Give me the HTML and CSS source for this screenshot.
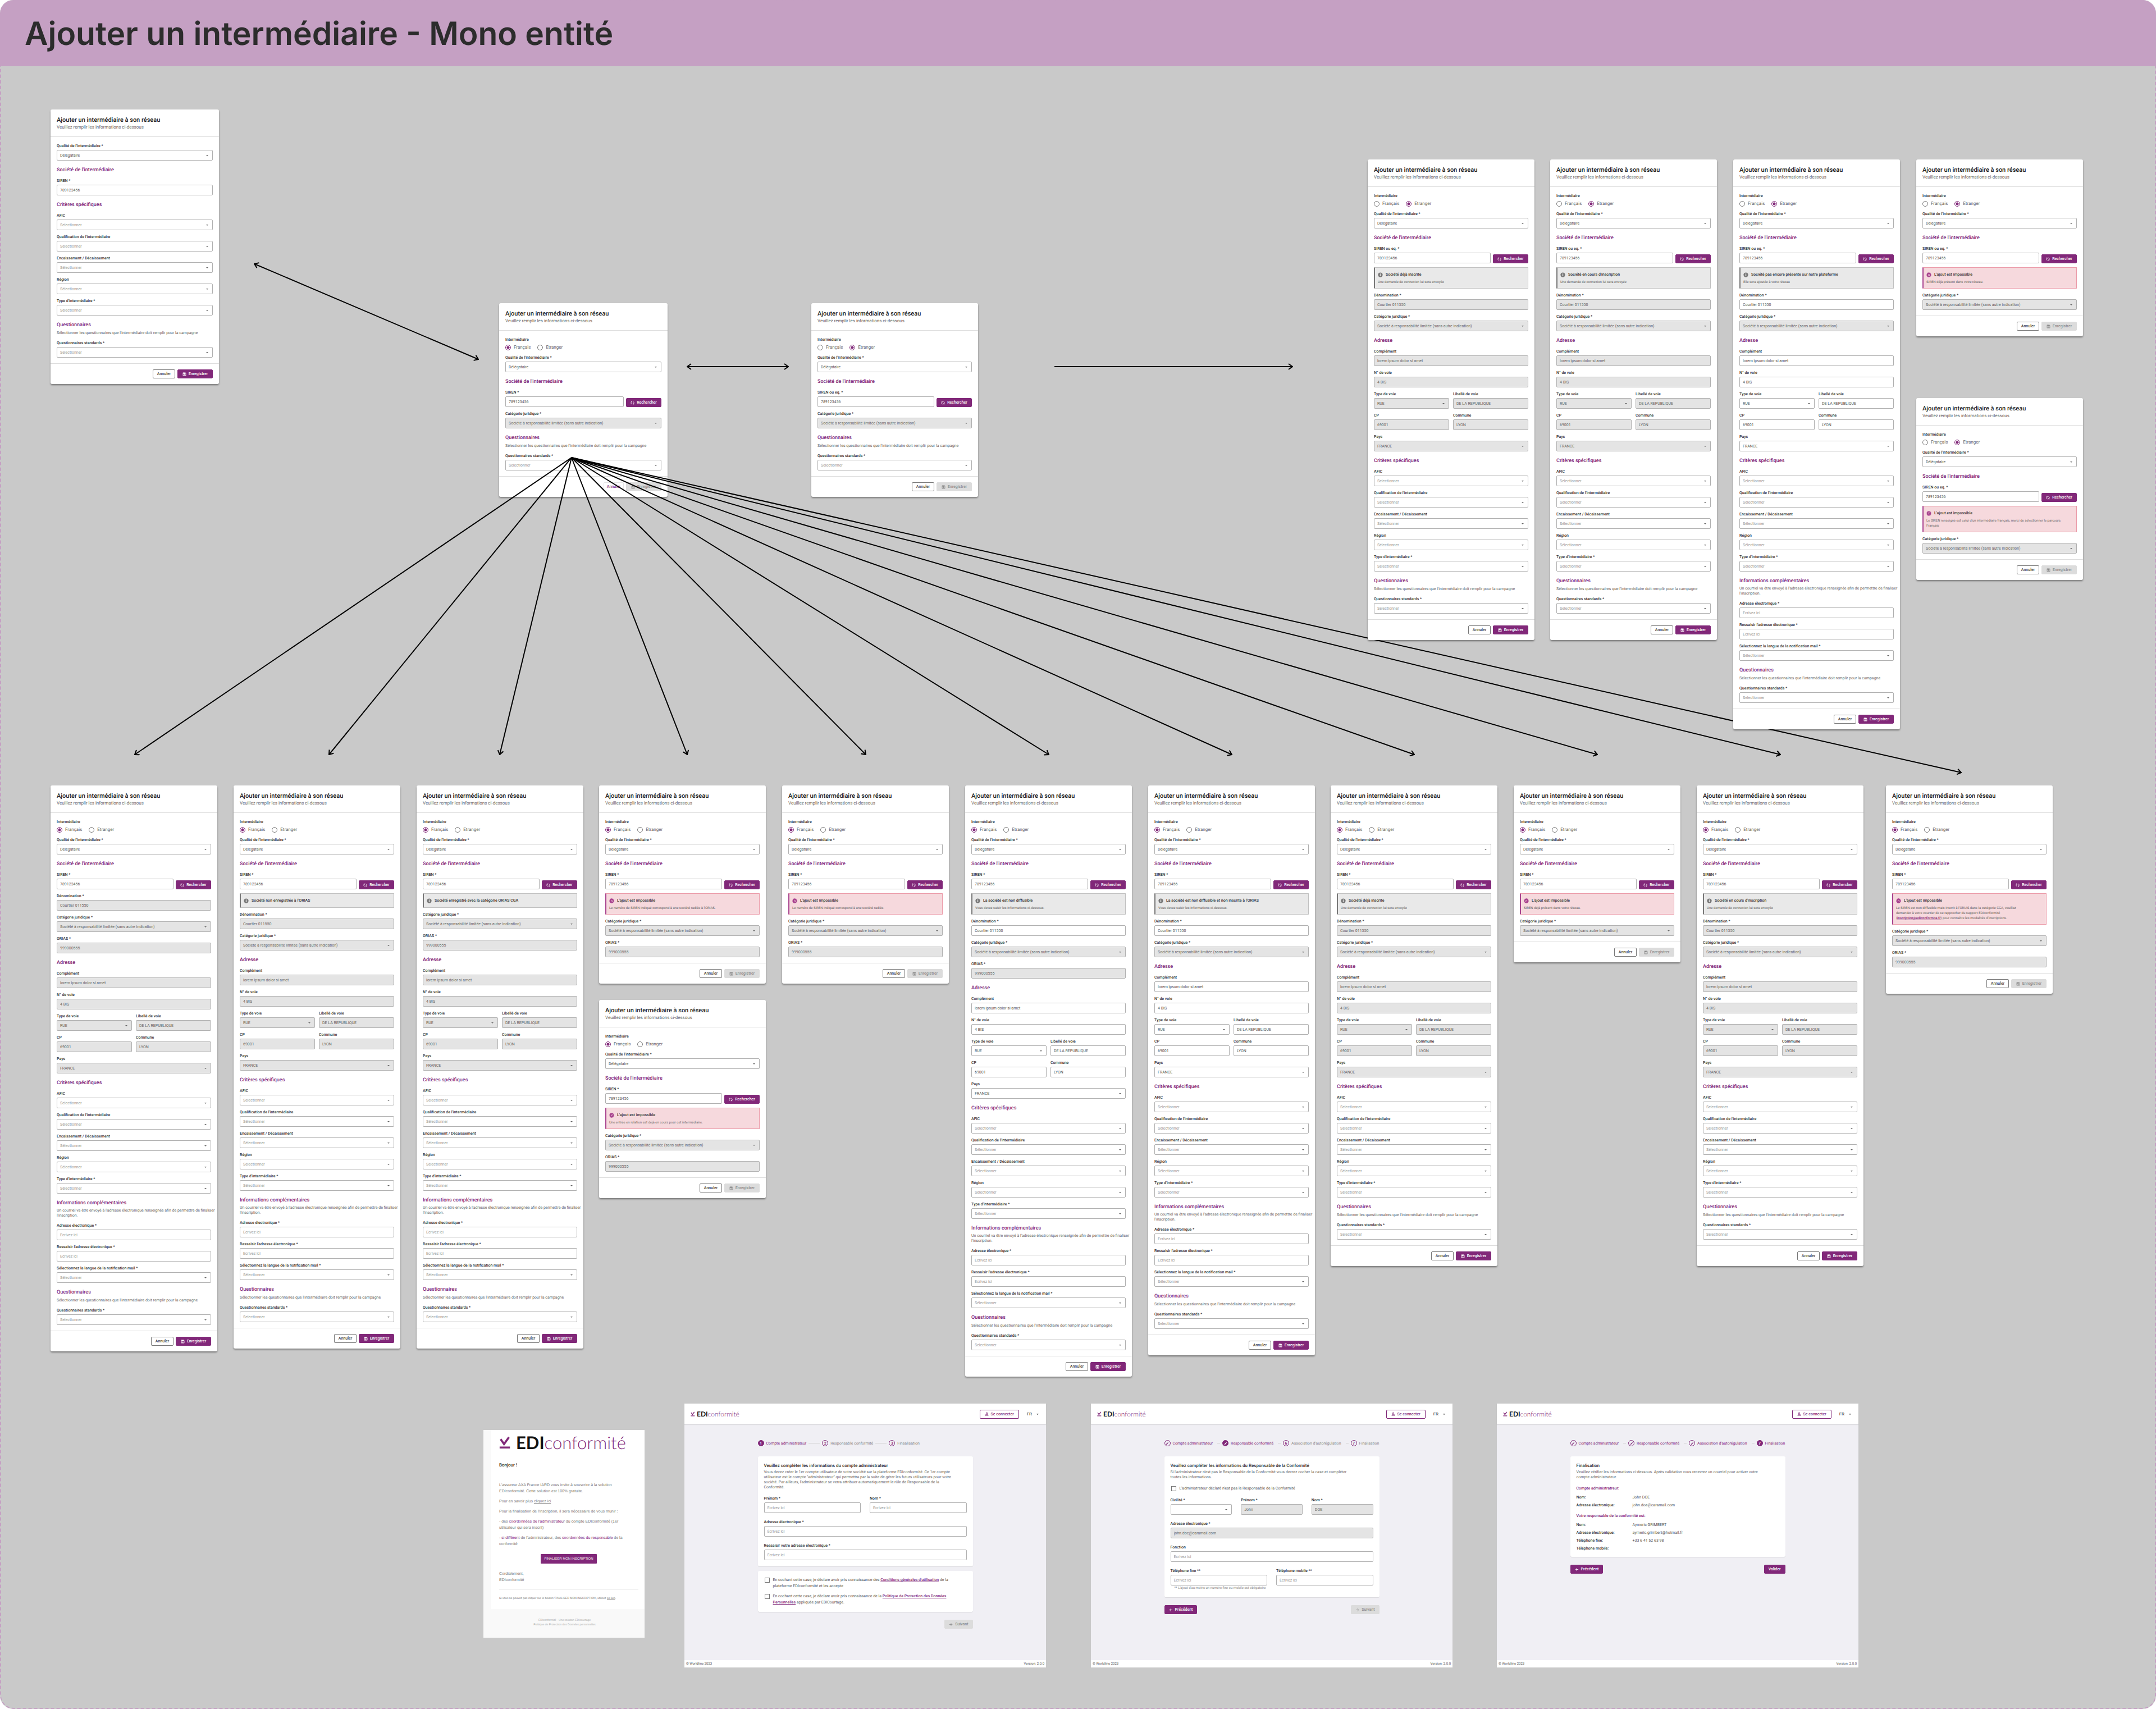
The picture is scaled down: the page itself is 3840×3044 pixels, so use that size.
FILE: index.html
```html
<!DOCTYPE html>
<html lang="fr">
<head>
    <meta charset="utf-8">
    <title>Ajouter un intermédiaire - Mono entité</title>
    <link rel="stylesheet" href="styles.css">
</head>
<body>

<!-- Icons -->
<svg class="sprite" aria-hidden="true">
    <symbol id="i-save" viewBox="0 0 24 24"><path fill="currentColor" fill-rule="evenodd" d="M4 2h14l4 4v14a2 2 0 0 1-2 2H4a2 2 0 0 1-2-2V4a2 2 0 0 1 2-2zm1 3v14h14V8l-3-3v5H6V5H5zm7 7a3 3 0 1 1 0 6 3 3 0 0 1 0-6z"/></symbol>
    <symbol id="i-sync" viewBox="0 0 24 24"><g fill="none" stroke="currentColor" stroke-width="3"><path d="M9 20c-4-1-6-4-6-8 0-3 2-6 4-7M15 4c4 1 6 4 6 8 0 3-2 6-4 7"/><path d="M3 4h5v5M21 20h-5v-5"/></g></symbol>
    <symbol id="i-info" viewBox="0 0 24 24"><circle cx="12" cy="12" r="11" fill="#777"/><path fill="#e9e9e9" d="M10 10h4v8h-4zM10 6h4v3h-4z"/></symbol>
    <symbol id="i-error" viewBox="0 0 24 24"><path fill="#a8438f" d="M12 0l3 2 4 0 1 4 3 2-1 4 1 4-3 2-1 4h-4l-3 2-3-2H5l-1-4-3-2 1-4-1-4 3-2 1-4h4z"/><path stroke="#f6d9dd" stroke-width="2" d="M8 8l8 8M16 8l-8 8"/></symbol>
    <symbol id="i-user" viewBox="0 0 24 24"><g fill="none" stroke="currentColor" stroke-width="3"><circle cx="12" cy="7" r="4"/><path d="M3 21v-2c0-3 5-4 9-4s9 1 9 4v2z"/></g></symbol>
    <symbol id="i-pen" viewBox="0 0 24 24"><path fill="currentColor" d="M3 17v4h4L18 10l-4-4zM20 8c1-1 1-1 0-2l-2-2c-1-1-1-1-2 0l-1 1 4 4z"/></symbol>
    <symbol id="i-left" viewBox="0 0 24 24"><path fill="none" stroke="currentColor" stroke-width="3" d="M21 12H5M12 4l-8 8 8 8"/></symbol>
    <symbol id="i-right" viewBox="0 0 24 24"><path fill="none" stroke="currentColor" stroke-width="3" d="M3 12h16M12 4l8 8-8 8"/></symbol>
    <symbol id="i-logo" viewBox="0 0 24 24"><path fill="none" stroke="currentColor" stroke-width="4" d="M3 5l7 10L20 1M1 22h21"/></symbol>
</svg>

<main class="board">
    <h1 class="board-title">Ajouter un intermédiaire - Mono entité</h1>
    <div class="canvas" id="canvas">
        <svg class="arrows" id="arrows" aria-hidden="true">
            <defs>
                <marker id="head" viewBox="0 0 12 12" refX="11" refY="6" markerWidth="12" markerHeight="12" markerUnits="userSpaceOnUse" orient="auto-start-reverse">
                    <path d="M4 1l7 5-7 5" fill="none" stroke="#000" stroke-width="2"/>
                </marker>
            </defs>
        </svg>

        <!-- Invitation mail -->
        <article class="mail" data-x="861" data-y="2547">
            <div class="mail-body">
                <div class="logo logo-big"><svg><use href="#i-logo"/></svg><b>EDI</b><span>conformité</span></div>
                <h2>Bonjour !</h2>
                <p>L'assureur AXA France IARD vous invite à souscrire à la solution<br>EDIconformité. Cette solution est 100% gratuite.</p>
                <p>Pour en savoir plus <a href="#">cliquez ici</a></p>
                <p>Pour la finalisation de l'inscription, il sera nécessaire de vous munir :</p>
                <p>- des <em>coordonnées de l'administrateur</em> du compte EDIconformité (1er<br>utilisateur qui sera inscrit)</p>
                <p>- <em>si différent</em> de l'administrateur, des <em>coordonnées du responsable</em> de la<br>conformité</p>
                <button class="mail-btn">FINALISER MON INSCRIPTION</button>
                <p>Cordialement,<br>EDIconformité</p>
                <p class="mail-note">Si vous ne pouvez pas cliquer sur le bouton 'FINALISER MON INSCRIPTION', utilisez <a href="#">ce lien</a>.</p>
            </div>
            <footer>EDIconformité - Une solution EDIcourtage<br>Politique de Protection des Données personnelles</footer>
        </article>

        <!-- Step 1 -->
        <section class="screen" data-x="1219" data-y="2500">
            <header class="screen-head">
                <div class="logo"><svg><use href="#i-logo"/></svg><b>EDI</b><span>conformité</span></div>
                <button class="btn btn-login"><svg><use href="#i-user"/></svg>Se connecter</button>
                <button class="lang">FR</button>
            </header>
            <div class="screen-main">
                <ol class="steps steps-short">
                    <li class="on"><i>1</i>Compte administrateur</li>
                    <li><i>2</i>Responsable conformité</li>
                    <li><i>3</i>Finsalisation</li>
                </ol>
                <form class="panel">
                    <h2>Veuillez compléter les informations du compte administrateur</h2>
                    <p>Vous devez créer le 1er compte utilisateur de votre société sur la plateforme EDIconformité. Ce 1er compte<br>utilisateur est le compte "administrateur" qui permettra par la suite de gérer les futurs utilisateurs pour votre<br>société. Par ailleurs, l'administrateur se verra attribuer automatiquement le rôle de Responsable de la<br>Conformité.</p>
                    <div class="row">
                        <div class="field"><label for="s1-prenom">Prénom *</label><input id="s1-prenom" placeholder="Écrivez ici"></div>
                        <div class="field"><label for="s1-nom">Nom *</label><input id="s1-nom" placeholder="Écrivez ici"></div>
                    </div>
                    <div class="field"><label for="s1-mail">Adresse électronique *</label><input id="s1-mail" placeholder="Écrivez ici"></div>
                    <div class="field"><label for="s1-mail2">Ressaisir votre adresse électronique *</label><input id="s1-mail2" placeholder="Écrivez ici"></div>
                </form>
                <div class="panel panel-terms">
                    <label class="check"><input type="checkbox"><span>En cochant cette case, je déclare avoir pris connaissance des <a href="#">Conditions générales d'utilisation</a> de la<br>plateforme EDIconformité et les accepte</span></label>
                    <label class="check"><input type="checkbox"><span>En cochant cette case, je déclare avoir pris connaissance de la <a href="#">Politique de Protection des Données<br>Personnelles</a> appliquée par EDICourtage.</span></label>
                </div>
                <div class="nav nav-end"><button class="btn btn-off" disabled><svg><use href="#i-right"/></svg>Suivant</button></div>
            </div>
            <footer class="screen-foot"><span>© Worldline 2023</span><span>Version: 2.0.0</span></footer>
        </section>

        <!-- Step 2 -->
        <section class="screen" data-x="1943" data-y="2500">
            <header class="screen-head">
                <div class="logo"><svg><use href="#i-logo"/></svg><b>EDI</b><span>conformité</span></div>
                <button class="btn btn-login"><svg><use href="#i-user"/></svg>Se connecter</button>
                <button class="lang">FR</button>
            </header>
            <div class="screen-main">
                <ol class="steps">
                    <li class="done"><i><svg><use href="#i-pen"/></svg></i>Compte administrateur</li>
                    <li class="on"><i><svg><use href="#i-pen"/></svg></i>Responsable conformité</li>
                    <li><i>6</i>Association d'autorégulation</li>
                    <li><i>7</i>Finalisation</li>
                </ol>
                <form class="panel">
                    <h2>Veuillez compléter les informations du Responsable de la Conformité</h2>
                    <p>Si l'administrateur n'est pas le Responsable de la Conformité vous devrez cocher la case et compléter<br>toutes les informations.</p>
                    <label class="check"><input type="checkbox"><span>L'administrateur déclaré n'est pas le Responsable de la Conformité</span></label>
                    <div class="row">
                        <div class="field"><label for="s2-civ">Civilité *</label><div class="select"><select id="s2-civ"><option></option></select></div></div>
                        <div class="field"><label for="s2-prenom">Prénom *</label><input id="s2-prenom" value="John" disabled></div>
                        <div class="field"><label for="s2-nom">Nom *</label><input id="s2-nom" value="DOE" disabled></div>
                    </div>
                    <div class="field"><label for="s2-mail">Adresse électronique *</label><input id="s2-mail" value="john.doe@caramail.com" disabled></div>
                    <div class="field"><label for="s2-fonc">Fonction</label><input id="s2-fonc" placeholder="Écrivez ici"></div>
                    <div class="row">
                        <div class="field"><label for="s2-fixe">Téléphone fixe **</label><input id="s2-fixe" placeholder="Écrivez ici"></div>
                        <div class="field"><label for="s2-mob">Téléphone mobile **</label><input id="s2-mob" placeholder="Écrivez ici"></div>
                    </div>
                    <small>** L'ajout d'au moins un numéro fixe ou mobile est obligatoire</small>
                </form>
                <div class="nav">
                    <button class="btn"><svg><use href="#i-left"/></svg>Précédent</button>
                    <button class="btn btn-off" disabled><svg><use href="#i-right"/></svg>Suivant</button>
                </div>
            </div>
            <footer class="screen-foot"><span>© Worldline 2023</span><span>Version: 2.0.0</span></footer>
        </section>

        <!-- Last step -->
        <section class="screen" data-x="2666" data-y="2500">
            <header class="screen-head">
                <div class="logo"><svg><use href="#i-logo"/></svg><b>EDI</b><span>conformité</span></div>
                <button class="btn btn-login"><svg><use href="#i-user"/></svg>Se connecter</button>
                <button class="lang">FR</button>
            </header>
            <div class="screen-main">
                <ol class="steps">
                    <li class="done"><i><svg><use href="#i-pen"/></svg></i>Compte administrateur</li>
                    <li class="done"><i><svg><use href="#i-pen"/></svg></i>Responsable conformité</li>
                    <li class="done"><i><svg><use href="#i-pen"/></svg></i>Association d'autorégulation</li>
                    <li class="on"><i>7</i>Finalisation</li>
                </ol>
                <div class="panel panel-recap">
                    <h2>Finalisation</h2>
                    <p>Veuillez vérifier les informations ci-dessous. Après validation vous recevrez un courriel pour activer votre<br>compte administrateur.</p>
                    <h3>Compte administratreur:</h3>
                    <dl>
                        <dt>Nom:</dt><dd>John DOE</dd>
                        <dt>Adresse électronique:</dt><dd>john.doe@caramail.com</dd>
                    </dl>
                    <h3>Votre responsable de la conformité est:</h3>
                    <dl>
                        <dt>Nom:</dt><dd>Aymeric GRIMBERT</dd>
                        <dt>Adresse électronique:</dt><dd>aymeric.grimbert@hotmail.fr</dd>
                        <dt>Téléphone fixe:</dt><dd>+33 6 41 52 63 98</dd>
                        <dt>Téléphone mobile:</dt><dd></dd>
                    </dl>
                </div>
                <div class="nav">
                    <button class="btn"><svg><use href="#i-left"/></svg>Précédent</button>
                    <button class="btn">Valider</button>
                </div>
            </div>
            <footer class="screen-foot"><span>© Worldline 2023</span><span>Version: 2.0.0</span></footer>
        </section>
    </div>
</main>

<script src="script.js"></script>
</body>
</html>
```

FILE: styles.css
```css
* {
    box-sizing: border-box;
}
body {
    margin: 0;
    background: #fff;
    font-family: Roboto, sans-serif;
    font-size: 7px;
    line-height: 10px;
    color: #333;
    text-rendering: geometricPrecision;
}
h1, h2, h3, p, ol, dl, dd {
    margin: 0;
    padding: 0;
}
button, input, select {
    font: inherit;
    color: inherit;
    margin: 0;
}
.sprite {
    position: absolute;
    width: 0;
    height: 0;
}

/* ---- Board ---- */
.board {
    position: relative;
    display: flex;
    flex-direction: column;
    min-height: 100vh;
    background: #c9c9c9;
    border-radius: 24px;
    overflow: hidden;
}
.board::after {
    content: "";
    position: absolute;
    inset: 0;
    border: 2px dashed #c5a0c3;
    border-radius: 24px;
    pointer-events: none;
}
.board-title {
    padding: 25px 44px 24px;
    background: #c5a0c3;
    font-family: Inter, sans-serif;
    font-size: 57px;
    font-weight: 600;
    line-height: 69px;
    color: #2c2c2c;
}
.canvas {
    flex: 1;
}
.arrows {
    position: absolute;
    top: 0;
    left: 0;
    width: 100%;
    height: 100%;
}
.arrows line {
    stroke: #000;
    stroke-width: 2;
}

/* ---- Form cards ---- */
.card {
    position: absolute;
    width: 297px;
    background: #fff;
    border-radius: 3px;
    box-shadow: 0 2px 3px rgba(0, 0, 0, 0.4);
}
.card-wide {
    width: 300px;
}
.card-head {
    height: 49px;
    padding: 12px 11px;
    border-bottom: 1px solid #ddd;
}
.card-head h2 {
    font-size: 11px;
    line-height: 14px;
    font-weight: 500;
    color: #222;
}
.card-head p {
    font-size: 8px;
    line-height: 12px;
    color: #666;
}
.card-body {
    padding: 11px 11px 10px;
    display: flex;
    flex-direction: column;
    gap: 7px;
}
.card-foot {
    display: flex;
    justify-content: flex-end;
    gap: 4px;
    padding: 10px 11px;
    border-top: 1px solid #ddd;
}
.section {
    margin-top: 4px;
    padding-bottom: 1px;
}
.section h3 {
    font-size: 9px;
    line-height: 12px;
    font-weight: 500;
    color: #812879;
}
.section p {
    margin-top: 3px;
    color: #666;
}
.section .tight {
    line-height: 9px;
    white-space: nowrap;
}

/* ---- Fields ---- */
.field {
    display: flex;
    flex-direction: column;
    gap: 2px;
    flex: 1;
    min-width: 0;
}
.field > label, .field > .legend {
    font-weight: 500;
}
.row {
    display: flex;
    gap: 7px;
}
.field input:not([type=radio]), .field select {
    display: block;
    width: 100%;
    height: 19px;
    padding: 0 5px;
    border: 1px solid #b0b0b0;
    border-radius: 2px;
    background: #fff;
    color: #555;
    appearance: none;
}
.field input:disabled, .field select:disabled {
    background: #e4e4e4;
    color: #666;
    opacity: 1;
}
.field input::placeholder, .field select.empty {
    color: #999;
}
.select {
    position: relative;
}
.select::after {
    content: "";
    position: absolute;
    right: 8px;
    top: 9px;
    border: 2px solid transparent;
    border-top-color: #666;
    border-bottom: 0;
}
.radios {
    display: flex;
    gap: 12px;
    height: 13px;
}
.radios label {
    display: flex;
    align-items: center;
    gap: 5px;
    font-size: 8px;
    color: #666;
}
.radios input {
    appearance: none;
    width: 10px;
    height: 10px;
    border: 1px solid #777;
    border-radius: 50%;
}
.radios input:checked {
    border-color: #812879;
    background: radial-gradient(#812879 0 2px, #fff 3px);
}
.search {
    display: flex;
    align-items: flex-end;
    gap: 4px;
}

/* ---- Buttons ---- */
.btn {
    display: flex;
    align-items: center;
    justify-content: center;
    gap: 4px;
    height: 16px;
    padding: 0 7px;
    border: 1px solid #812879;
    border-radius: 2px;
    background: #812879;
    color: #fff;
    font-weight: 500;
    white-space: nowrap;
}
.btn svg {
    width: 7px;
    height: 7px;
}
.btn-main {
    width: 63px;
}
.btn-cancel {
    width: 40px;
    background: #fff;
    border-color: #777;
    color: #444;
}
.btn-soft {
    width: 36px;
    background: transparent;
    border-color: #e4e4e4;
    color: #812879;
}
.btn-off {
    background: #dcdcdc;
    border-color: #dcdcdc;
    color: #8c8c8c;
}

/* ---- Alerts ---- */
.alert {
    padding: 6px 6px 6px 5px;
    border: 1px solid #c0c0c0;
    border-left: 2px solid #777;
    border-radius: 1px;
    background: #e9e9e9;
    color: #666;
    font-size: 6px;
    line-height: 9px;
}
.alert h4 {
    display: flex;
    align-items: center;
    gap: 5px;
    margin: 0;
    font-size: 7px;
    line-height: 12px;
    font-weight: 500;
    color: #333;
}
.alert h4 svg {
    width: 9px;
    height: 9px;
}
.alert p {
    margin-top: 3px;
}
.alert-error {
    background: #f6d9dd;
    border-color: #eb9aa8;
    border-left-color: #a8438f;
}
.alert a {
    color: #812879;
    font-weight: 500;
}

/* ---- Logo ---- */
.logo {
    display: flex;
    align-items: center;
    font-family: Lato, sans-serif;
    font-size: 12px;
    line-height: 18px;
    color: #812879;
}
.logo svg {
    width: 8px;
    height: 9px;
    margin-right: 3px;
}
.logo b {
    font-weight: 700;
    color: #111;
}
.logo span {
    font-weight: 300;
}
.logo-big {
    font-size: 31px;
    line-height: 28px;
}
.logo-big svg {
    width: 21px;
    height: 23px;
    margin-right: 9px;
}

/* ---- Mail ---- */
.mail {
    position: absolute;
    width: 287px;
    background: #fff;
    border-left: 13px solid #f9f9f9;
    font-family: "Liberation Sans", Arial, sans-serif;
    line-height: 11px;
    color: #777;
}
.mail-body {
    padding: 8px 11px 13px 15px;
}
.mail h2 {
    margin: 21px 0 24px;
    font-family: Roboto, sans-serif;
    font-size: 8px;
    line-height: 12px;
    font-weight: 500;
    color: #222;
}
.mail p {
    margin-bottom: 7px;
}
.mail a {
    color: inherit;
}
.mail em {
    font-style: normal;
    color: #812879;
}
.mail-btn {
    display: block;
    width: 100px;
    height: 17px;
    margin: 12px auto 13px;
    padding: 0;
    border: 0;
    border-radius: 1px;
    background: #812879;
    color: #fff;
    font-size: 6px;
}
.mail .mail-note {
    margin: 11px 0 0;
    padding-top: 10px;
    border-top: 1px solid #eee;
    font-size: 5px;
}
.mail footer {
    padding: 16px 11px 19px 0;
    background: #f9f9f9;
    font-size: 5px;
    line-height: 8px;
    text-align: center;
    color: #aaa;
}

/* ---- Screens ---- */
.screen {
    position: absolute;
    display: flex;
    flex-direction: column;
    width: 644px;
    height: 470px;
    background: #f0eff4;
}
.screen-head {
    display: flex;
    align-items: center;
    height: 37px;
    padding: 0 11px;
    background: #fff;
    box-shadow: 0 1px 1px rgba(0, 0, 0, 0.1);
}
.btn-login {
    margin-left: auto;
    padding: 0 8px;
    background: #fff;
    color: #812879;
}
.lang {
    display: flex;
    align-items: center;
    gap: 8px;
    margin-left: 12px;
    padding: 0 2px;
    border: 0;
    background: none;
    font-size: 8px;
    color: #222;
}
.lang::after {
    content: "";
    border: 2px solid transparent;
    border-top-color: #222;
    border-bottom: 0;
}
.screen-main {
    flex: 1;
    display: flex;
    flex-direction: column;
    width: 383px;
    margin: 0 auto;
    padding-top: 28px;
}
.screen-foot {
    display: flex;
    justify-content: space-between;
    padding: 2px 3px 1px;
    background: #fff;
    color: #555;
    font-size: 6px;
}
.steps {
    display: flex;
    justify-content: space-between;
    list-style: none;
    margin-bottom: 18px;
    color: #888;
}
.steps li {
    display: flex;
    align-items: center;
    gap: 4px;
}
.steps li + li::before {
    content: "";
    width: 5px;
    border-top: 1px solid #ccc;
}
.steps-short {
    justify-content: flex-start;
    gap: 4px;
}
.steps-short li + li::before {
    width: 20px;
}
.steps i {
    display: flex;
    align-items: center;
    justify-content: center;
    width: 11px;
    height: 11px;
    border: 1px solid #812879;
    border-radius: 50%;
    font-style: normal;
    font-weight: 700;
    color: #812879;
}
.steps svg {
    width: 6px;
    height: 6px;
}
.steps .on, .steps .done {
    color: #812879;
}
.steps .on i {
    background: #812879;
    color: #fff;
}
.panel {
    padding: 11px;
    border-radius: 3px;
    background: #fff;
    box-shadow: 0 1px 1px rgba(0, 0, 0, 0.1);
}
.panel h2 {
    font-size: 8px;
    line-height: 12px;
    font-weight: 500;
}
.panel > p {
    margin: 1px 0 10px;
    line-height: 9px;
    color: #666;
}
.panel .field + .field, .panel .row + .field, .panel .field + .row {
    margin-top: 11px;
}
.panel .row {
    gap: 16px;
}
.panel .row .field {
    margin-top: 0;
}
.panel small {
    display: block;
    padding-left: 7px;
    font-size: 6px;
    color: #888;
}
.check {
    display: flex;
    gap: 5px;
    line-height: 11px;
    color: #555;
}
.check input {
    appearance: none;
    flex: none;
    width: 9px;
    height: 9px;
    margin: 1px;
    border: 1px solid #777;
    border-radius: 0;
}
.check a {
    color: #812879;
    font-weight: 500;
}
.panel p + .check {
    margin-bottom: 10px;
}
.panel-terms {
    display: flex;
    flex-direction: column;
    gap: 7px;
    margin-top: 8px;
}
.panel-recap {
    padding-bottom: 8px;
}
.panel h3 {
    margin: 7px 0 4px;
    font-size: 7px;
    font-weight: 500;
    color: #812879;
}
.panel dl {
    display: grid;
    grid-template-columns: 100px 1fr;
    line-height: 14px;
}
.panel dt {
    font-weight: 500;
}
.panel dd {
    color: #555;
}
.nav {
    display: flex;
    justify-content: space-between;
    margin-top: 14px;
}
.nav-end {
    justify-content: flex-end;
}
```

FILE: script.js
```js
// ---- Field helpers ----
let uid = 0;

function field(label, value, opt = {}) {
    const id = 'f' + (++uid);
    const off = opt.off ? ' disabled' : '';
    let control;
    if (opt.select) {
        const empty = opt.empty ? ' class="empty"' : '';
        control = `<div class="select"><select id="${id}"${empty}${off}><option>${value}</option></select></div>`;
    } else if (opt.empty) {
        control = `<input id="${id}" placeholder="${value}">`;
    } else {
        control = `<input id="${id}" value="${value}"${off}>`;
    }
    return `<div class="field"><label for="${id}">${label}</label>${control}</div>`;
}

const pick = (label, value = 'Sélectionner') => field(label, value, { select: true, empty: true });
const section = (title, text = '', cls = '') =>
    `<div class="section"><h3>${title}</h3>${text ? `<p class="${cls}">${text}</p>` : ''}</div>`;
const row = (a, b) => `<div class="row">${a}${b}</div>`;

// ---- Form blocks ----
function origin(foreign) {
    const name = 'r' + (++uid);
    return `<div class="field"><span class="legend">Intermédiaire</span><div class="radios">
        <label><input type="radio" name="${name}" ${foreign ? '' : 'checked'}>Français</label>
        <label><input type="radio" name="${name}" ${foreign ? 'checked' : ''}>Etranger</label>
    </div></div>`;
}

const quality = () => field("Qualité de l'intermédiaire *", 'Délégataire', { select: true });

function siren(label) {
    return `<div class="search">${field(label, '789123456')}
        <button type="button" class="btn btn-main"><svg><use href="#i-sync"/></svg>Rechercher</button></div>`;
}

function alertBox(type, title, text) {
    return `<div class="alert alert-${type}"><h4><svg><use href="#i-${type}"/></svg>${title}</h4>${text ? `<p>${text}</p>` : ''}</div>`;
}

const denom = off => field('Dénomination *', 'Courtier 011550', { off });
const categ = () => field('Catégorie juridique *', 'Société à responsabilité limitée (sans autre indication)', { select: true, off: true });
const orias = () => field('ORIAS *', '999000555', { off: true });

const address = off => section('Adresse') +
    field('Complément', 'lorem ipsum dolor si amet', { off }) +
    field('N° de voie', '4 BIS', { off }) +
    row(field('Type de voie', 'RUE', { off, select: true }), field('Libellé de voie', 'DE LA REPUBLIQUE', { off })) +
    row(field('CP', '69001', { off }), field('Commune', 'LYON', { off })) +
    field('Pays', 'FRANCE', { off, select: true });

const criteria = () => section('Critères spécifiques') +
    pick('AFIC', 'Selectionner') +
    pick("Qualification de l'intermédiaire") +
    pick('Encaissement / Décaissement') +
    pick('Région') +
    pick("Type d'intermédiaire *");

const infos = () => section('Informations complémentaires',
    "Un courriel va être envoyé à l'adresse électronique renseignée afin de permettre de finaliser<br>l'inscription.", 'tight') +
    field('Adresse électronique *', 'Ecrivez ici', { empty: true }) +
    field("Ressaisir l'adresse électronique *", 'Ecrivez ici', { empty: true }) +
    pick('Sélectionnez la langue de la notification mail *');

const quest = () => section('Questionnaires', "Sélectionner les questionnaires que l'intermédiaire doit remplir pour la campagne") +
    pick('Questionnaires standards *', 'Selectionner');

const company = () => section("Société de l'intermédiaire");
const french = () => origin(false) + quality() + company() + siren('SIREN *');
const foreign = () => origin(true) + quality() + company() + siren('SIREN ou eq. *');

const info = (title, text) => alertBox('info', title, text);
const error = text => alertBox('error', "L'ajout est impossible", text);

// ---- Cards of the board ----
const behind = [
    { x: 889, y: 540, wide: true, soft: true, off: true, body: french() + categ() + quest() },
    { x: 1445, y: 540, off: true, body: foreign() + categ() + quest() }
];

const cards = [
    { x: 90, y: 195, wide: true, body: quality() + company() + field('SIREN *', '789123456') + criteria() + quest() },
    { x: 2436, y: 284, body: foreign() + info('Société déjà inscrite', 'Une demande de connexion lui sera envoyée') + denom(true) + categ() + address(true) + criteria() + quest() },
    { x: 2761, y: 284, body: foreign() + info("Société en cours d'inscription", 'Une demande de connexion lui sera envoyée') + denom(true) + categ() + address(true) + criteria() + quest() },
    { x: 3087, y: 284, body: foreign() + info('Société pas encore présente sur notre plateforme', 'Elle sera ajoutée à votre réseau') + denom(false) + categ() + address(false) + criteria() + infos() + quest() },
    { x: 3413, y: 284, off: true, body: foreign() + error('SIREN déjà présent dans votre réseau.') + categ() },
    { x: 3413, y: 709, off: true, body: foreign() + error("Le SIREN renseigné est celui d'un intermédiaire français, merci de sélectionner le parcours<br>Français") + categ() },

    { x: 90, y: 1399, body: french() + denom(true) + categ() + orias() + address(true) + criteria() + infos() + quest() },
    { x: 416, y: 1399, body: french() + info("Société non enregistrée à l'ORIAS") + denom(true) + categ() + address(true) + criteria() + infos() + quest() },
    { x: 742, y: 1399, body: french() + info('Société enregistré avec la catégorie ORIAS CGA') + categ() + orias() + address(true) + criteria() + infos() + quest() },
    { x: 1067, y: 1399, off: true, body: french() + error("Le numéro de SIREN indiqué correspond à une société radiée à l'ORIAS.") + categ() + orias() },
    { x: 1067, y: 1781, off: true, body: french() + error('Une entrée en relation est déjà en cours pour cet intermédiaire.') + categ() + orias() },
    { x: 1393, y: 1399, off: true, body: french() + error('Le numéro de SIREN indiqué correspond à une société radiée.') + categ() + orias() },
    { x: 1719, y: 1399, body: french() + info('La société est non diffusible', 'Vous devez saisir les informations ci-dessous.') + denom(false) + categ() + orias() + address(false) + criteria() + infos() + quest() },
    { x: 2045, y: 1399, body: french() + info("La société est non diffusible et non inscrite à l'ORIAS", 'Vous devez saisir les informations ci-dessous.') + denom(false) + categ() + address(false) + criteria() + infos() + quest() },
    { x: 2370, y: 1399, body: french() + info('Société déjà inscrite', 'Une demande de connexion lui sera envoyée') + denom(true) + categ() + address(true) + criteria() + quest() },
    { x: 2696, y: 1399, off: true, body: french() + error('SIREN déjà présent dans votre réseau.') + categ() },
    { x: 3022, y: 1399, body: french() + info("Société en cours d'inscription", 'Une demande de connexion lui sera envoyée') + denom(true) + categ() + address(true) + criteria() + quest() },
    { x: 3359, y: 1399, off: true, body: french() + error("Le SIREN est non diffusible mais inscrit à l'ORIAS dans la catégorie CGA, veuillez<br>demander à votre courtier de se rapprocher du support EDIconformité<br>(<a href=\"#\">inscription@ediconformite.fr</a>) pour connaître les modalités d'inscriptions.") + categ() + orias() }
];

function card(c) {
    const off = c.off ? ' btn-off' : '';
    return `<form class="card${c.wide ? ' card-wide' : ''}" style="left:${c.x}px;top:${c.y}px">
        <div class="card-head"><h2>Ajouter un intermédiaire à son réseau</h2><p>Veuillez remplir les informations ci-dessous</p></div>
        <div class="card-body">${c.body}</div>
        <div class="card-foot">
            <button type="button" class="btn ${c.soft ? 'btn-soft' : 'btn-cancel'}">Annuler</button>
            <button type="button" class="btn btn-main${off}" ${c.off ? 'disabled' : ''}><svg><use href="#i-save"/></svg>Enregistrer</button>
        </div>
    </form>`;
}

// ---- Arrows: x1, y1, x2, y2, both ends ----
const arrows = [
    [453, 470, 852, 640, true],
    [1224, 653, 1404, 653, true],
    [1878, 653, 2302, 653],
    [1018, 815, 240, 1344],
    [1018, 815, 586, 1344],
    [1018, 815, 890, 1344],
    [1018, 815, 1224, 1344],
    [1018, 815, 1542, 1344],
    [1018, 815, 1868, 1344],
    [1018, 815, 2194, 1344],
    [1018, 815, 2519, 1344],
    [1018, 815, 2845, 1344],
    [1018, 815, 3171, 1344],
    [1018, 815, 3493, 1376]
];

const canvas = document.getElementById('canvas');
const svg = document.getElementById('arrows');

canvas.insertAdjacentHTML('afterbegin', behind.map(card).join(''));
canvas.insertAdjacentHTML('beforeend', cards.map(card).join(''));
svg.insertAdjacentHTML('beforeend', arrows.map(([x1, y1, x2, y2, both]) =>
    `<line x1="${x1}" y1="${y1}" x2="${x2}" y2="${y2}" marker-end="url(#head)"${both ? ' marker-start="url(#head)"' : ''}/>`).join(''));

// Place the mail and the screens
document.querySelectorAll('[data-x]').forEach(el => {
    el.style.left = el.dataset.x + 'px';
    el.style.top = el.dataset.y + 'px';
});
```
